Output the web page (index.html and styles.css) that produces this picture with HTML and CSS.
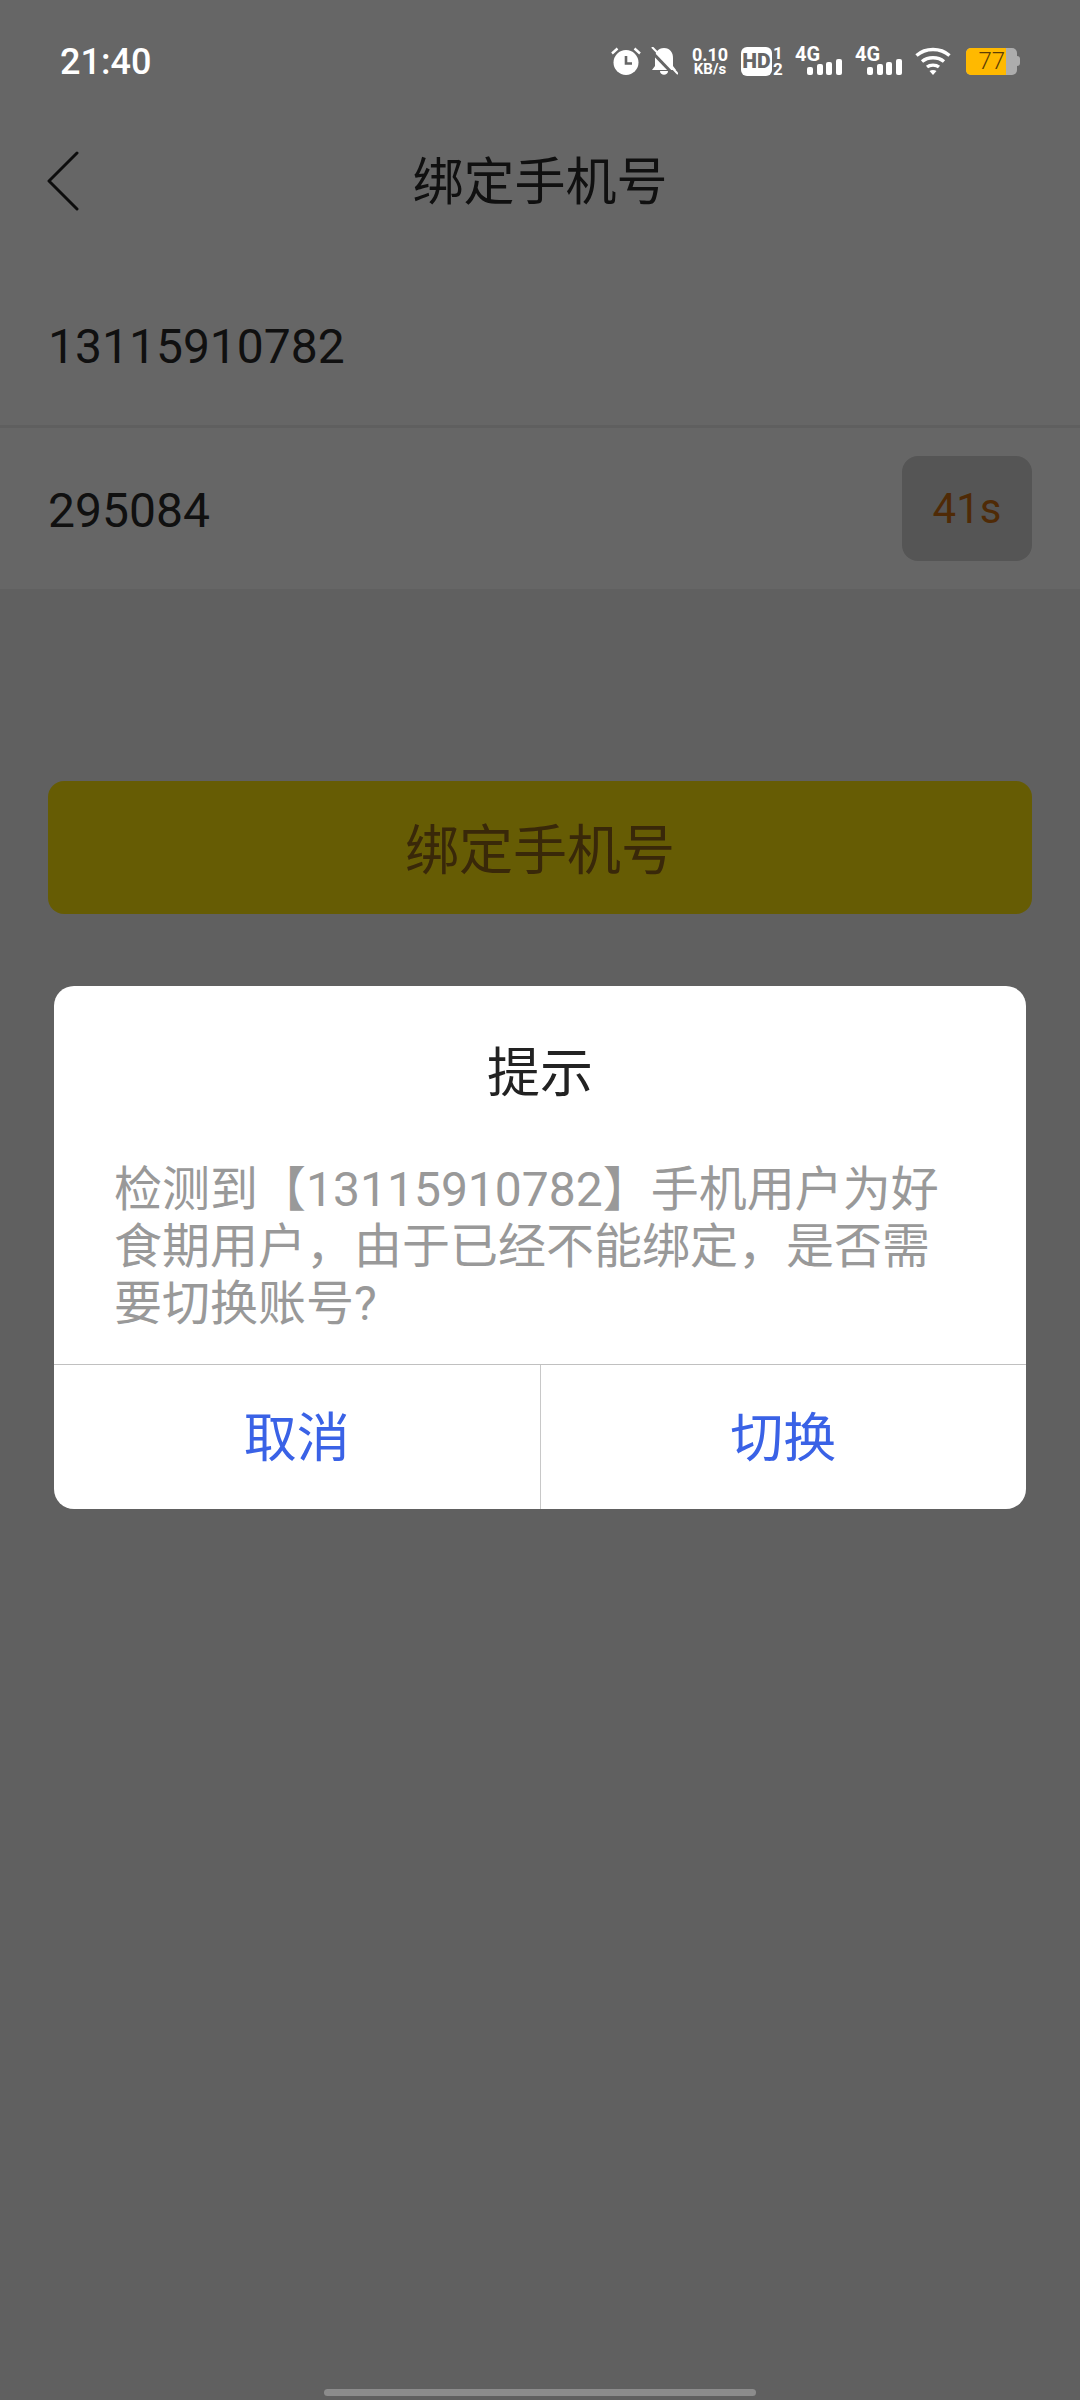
FILE: index.html
```html
<!DOCTYPE html>
<html lang="zh-CN">
<head>
    <meta charset="UTF-8">
    <meta name="viewport" content="width=device-width, initial-scale=1.0">
    <title>绑定手机号</title>
    <link rel="stylesheet" href="styles.css">
</head>
<body>
    <div class="page">
        <div class="status-bar">
            <span class="time">21:40</span>
            <div class="status-icons">
                <svg class="ic-alarm" width="30" height="28" viewBox="0 0 30 28">
                    <circle cx="15" cy="15.5" r="12.5" fill="#fff"/>
                    <path d="M15 9v7.5h6" fill="none" stroke="#666" stroke-width="2.6"/>
                    <path d="M1 6.500 6.500 1.500M29 6.500 23.500 1.500" fill="none" stroke="#fff" stroke-width="2.4"/>
                </svg>
                <svg class="ic-bell" width="28" height="28" viewBox="0 0 28 28">
                    <path d="M14 1c6 0 9 4.500 9 10v8l3 4H2l3-4v-8C5 5.500 8 1 14 1Z" fill="#fff"/>
                    <path d="M10 24h8c0 5-8 5-8 0Z" fill="#fff"/>
                    <path d="M0 3l24 25" stroke="#666" stroke-width="3"/>
                    <path d="M2 0l26 27" stroke="#fff" stroke-width="2"/>
                </svg>
                <div class="speed">
                    <span class="speed-num">0.10</span>
                    <span class="speed-unit">KB/s</span>
                </div>
                <div class="hd">
                    <span class="hd-box">HD</span>
                    <div class="hd-nums"><span>1</span><span>2</span></div>
                </div>
                <div class="signal">
                    <span class="signal-label">4G</span>
                    <div class="bars">
                        <i class="b1"></i><i class="b2"></i><i class="b3"></i><i class="b4"></i>
                    </div>
                </div>
                <div class="signal">
                    <span class="signal-label">4G</span>
                    <div class="bars">
                        <i class="b1"></i><i class="b2"></i><i class="b3"></i><i class="b4"></i>
                    </div>
                </div>
                <svg class="ic-wifi" width="36" height="28" viewBox="0 0 36 28">
                    <path d="M1.500 8.500C10.500 0.500 25.500 0.500 34.500 8.500" fill="none" stroke="#fff" stroke-width="3.4"/>
                    <path d="M7 14.500C13 9.500 23 9.500 29 14.500" fill="none" stroke="#fff" stroke-width="3.4"/>
                    <path d="M12 20C15 17.500 21 17.500 24 20" fill="none" stroke="#fff" stroke-width="3.2"/>
                    <path d="M14.500 24 18 28l3.500-4c-2-1.500-5-1.500-7 0Z" fill="#fff"/>
                </svg>
                <div class="battery">
                    <div class="battery-body">
                        <div class="battery-fill">77</div>
                    </div>
                    <div class="battery-nub"></div>
                </div>
            </div>
        </div>

        <div class="nav-bar">
            <svg class="back" width="32" height="60" viewBox="0 0 32 60">
                <path d="M30 2 2 30l28 28" fill="none" stroke="#222" stroke-width="3" stroke-linecap="round" stroke-linejoin="round"/>
            </svg>
            <span class="nav-title">绑定手机号</span>
        </div>

        <div class="form-row phone-row"><span class="phone-text">13115910782</span></div>
        <div class="form-row code-row">
            <span class="code-text">295084</span>
            <span class="count-chip">41s</span>
        </div>

        <button class="submit-btn">绑定手机号</button>

        <div class="scrim">
            <div class="dialog">
                <div class="dialog-title">提示</div>
                <div class="dialog-msg">检测到【13115910782】手机用户为好食期用户&#xFF0C;由于已经不能绑定&#xFF0C;是否需要切换账号?</div>
                <div class="dialog-btns">
                    <button class="dialog-btn">取消</button>
                    <button class="dialog-btn">切换</button>
                </div>
            </div>
        </div>

        <div class="home-bar"></div>
    </div>
</body>
</html>
```

FILE: styles.css
```css
* {
    box-sizing: border-box;
}
body {
    margin: 0;
    font-family: Roboto, "Noto Sans CJK SC", sans-serif;
    color: #2a2a2a;
}
.page {
    position: relative;
    width: 1080px;
    height: 2400px;
    overflow: hidden;
    background-color: #f0f0f0;
}
.page::before {
    content: "";
    position: absolute;
    left: 0;
    top: 0;
    width: 1080px;
    height: 589px;
    background-color: #fff;
}

/* status bar sits above the scrim */
.status-bar {
    position: relative;
    z-index: 2;
    height: 120px;
    padding: 47px 60px 0 60px;
    display: flex;
    justify-content: space-between;
    align-items: flex-start;
    color: #fff;
}
.time {
    font-size: 36px;
    font-weight: 500;
    line-height: 30px;
}
.status-icons {
    display: flex;
    align-items: flex-start;
    height: 28px;
}
.ic-bell {
    margin-left: 9px;
}
.speed {
    margin-left: 14px;
    width: 36px;
    display: flex;
    flex-direction: column;
    align-items: center;
    font-weight: 700;
}
.speed-num {
    font-size: 18px;
    line-height: 15px;
}
.speed-unit {
    font-size: 15px;
    line-height: 14px;
}
.hd {
    margin-left: 13px;
    display: flex;
}
.hd-box {
    width: 31px;
    height: 29px;
    border-radius: 6px;
    background-color: #fff;
    color: #666;
    font-size: 21px;
    font-weight: 900;
    line-height: 29px;
    text-align: center;
}
.hd-nums {
    width: 12px;
    height: 29px;
    display: flex;
    flex-direction: column;
    justify-content: space-between;
    align-items: center;
    font-size: 17px;
    font-weight: 700;
    line-height: 13px;
}
.signal {
    position: relative;
    width: 47px;
    height: 28px;
    margin-left: 11px;
}
.signal + .signal {
    margin-left: 13px;
}
.signal-label {
    position: absolute;
    left: 0;
    top: 0;
    font-size: 20px;
    font-weight: 700;
    line-height: 14px;
}
.bars {
    position: absolute;
    left: 12px;
    bottom: 0;
    display: flex;
    align-items: flex-end;
    gap: 3.5px;
}
.bars i {
    display: block;
    width: 6px;
    background-color: #fff;
    border-radius: 2px;
}
.bars .b1 { height: 8px; }
.bars .b2 { height: 11px; }
.bars .b3 { height: 13px; }
.bars .b4 { height: 16px; }
.ic-wifi {
    margin-left: 13px;
}
.battery {
    margin-left: 15px;
    display: flex;
    align-items: center;
    height: 28px;
}
.battery-body {
    width: 51px;
    height: 27px;
    border-radius: 5px;
    background-color: #adadad;
    overflow: hidden;
}
.battery-fill {
    width: 40px;
    height: 27px;
    padding-right: 1px;
    background-color: #ffb900;
    color: #5c3d05;
    font-size: 24px;
    font-weight: 300;
    line-height: 27px;
    text-align: right;
}
.battery-nub {
    width: 3px;
    height: 10px;
    background-color: #adadad;
    border-radius: 0 3px 3px 0;
}

.nav-bar {
    position: relative;
    height: 116px;
    display: flex;
    justify-content: center;
    align-items: center;
}
.back {
    position: absolute;
    left: 47px;
    top: 31px;
}
.nav-title {
    font-size: 51px;
    font-family: "Noto Sans CJK SC", sans-serif;
}

.form-row {
    position: relative;
    height: 161px;
    padding: 0 48px;
    display: flex;
    justify-content: space-between;
    align-items: center;
    font-size: 48px;
}
.phone-row {
    height: 164px;
    margin-top: 28px;
    border-bottom: 3px solid #ededed;
}
.phone-text {
    padding-top: 4px;
}
.code-text {
    padding-top: 3px;
}
.count-chip {
    width: 130px;
    height: 105px;
    border-radius: 16px;
    background-color: #d4d4d4;
    color: #c66a0f;
    font-size: 42px;
    line-height: 105px;
    text-align: center;
}

.submit-btn {
    position: relative;
    display: block;
    width: 984px;
    height: 133px;
    margin: 192px 48px 0;
    padding: 0 0 3px;
    border: none;
    border-radius: 16px;
    background-color: #ffe50c;
    color: #8f6418;
    font-family: "Noto Sans CJK SC", sans-serif;
    font-size: 54px;
}

.scrim {
    position: absolute;
    z-index: 1;
    left: 0;
    top: 0;
    width: 1080px;
    height: 2400px;
    padding-top: 986px;
    background-color: rgba(0, 0, 0, 0.6);
    display: flex;
    flex-direction: column;
    align-items: center;
}
.dialog {
    width: 972px;
    height: 523px;
    border-radius: 20px;
    background-color: #fff;
    overflow: hidden;
    display: flex;
    flex-direction: column;
    font-family: "Noto Sans CJK SC", sans-serif;
}
.dialog-title {
    margin-top: 47px;
    font-size: 53px;
    line-height: 72px;
    text-align: center;
    color: #222;
}
.dialog-msg {
    flex: 1;
    margin-top: 56px;
    padding: 0 60px;
    font-family: Roboto, "Noto Sans CJK SC", sans-serif;
    font-size: 48px;
    line-height: 57px;
    color: #999;
}
.dialog-btns {
    display: flex;
    height: 145px;
    border-top: 1px solid #c0c0c0;
}
.dialog-btn {
    flex: 1;
    padding: 0 0 6px;
    border: none;
    background: none;
    color: #3a62e6;
    font-family: "Noto Sans CJK SC", sans-serif;
    font-size: 53px;
}
.dialog-btn:first-child {
    border-right: 1px solid #c8c8c8;
}

.home-bar {
    position: absolute;
    z-index: 2;
    left: 324px;
    bottom: 4px;
    width: 432px;
    height: 7px;
    border-radius: 4px;
    background-color: #8c8c8c;
}
```
